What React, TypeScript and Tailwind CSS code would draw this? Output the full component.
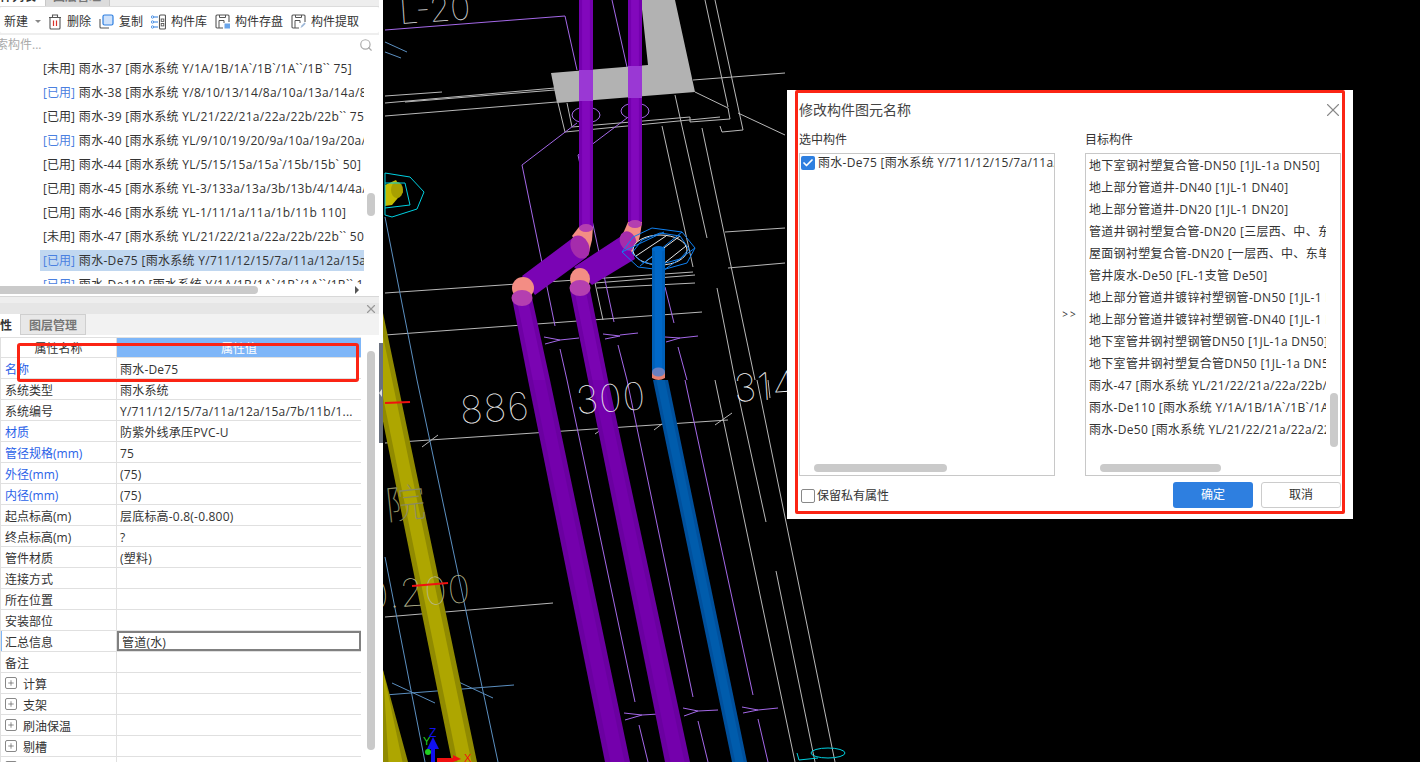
import React from 'react';
import { X, Search, Plus, Check } from 'lucide-react';

const FONT = "font-['Open_Sans','Noto_Sans_CJK_SC',sans-serif]";

// 构件列表
const LIST = [
  { tag: '[未用]', used: false, text: '雨水-37 [雨水系统 Y/1A/1B/1A`/1B`/1A``/1B`` 75]' },
  { tag: '[已用]', used: true, text: '雨水-38 [雨水系统 Y/8/10/13/14/8a/10a/13a/14a/8b/10b]' },
  { tag: '[已用]', used: false, text: '雨水-39 [雨水系统 YL/21/22/21a/22a/22b/22b`` 75]' },
  { tag: '[已用]', used: true, text: '雨水-40 [雨水系统 YL/9/10/19/20/9a/10a/19a/20a/9b]' },
  { tag: '[已用]', used: false, text: '雨水-44 [雨水系统 YL/5/15/15a/15a`/15b/15b` 50]' },
  { tag: '[已用]', used: false, text: '雨水-45 [雨水系统 YL-3/133a/13a/3b/13b/4/14/4a/14a]' },
  { tag: '[已用]', used: false, text: '雨水-46 [雨水系统 YL-1/11/1a/11a/1b/11b 110]' },
  { tag: '[未用]', used: false, text: '雨水-47 [雨水系统 YL/21/22/21a/22a/22b/22b`` 50]' },
  { tag: '[已用]', used: true, text: '雨水-De75 [雨水系统 Y/711/12/15/7a/11a/12a/15a/7b]', selected: true },
  { tag: '[已用]', used: true, text: '雨水-De110 [雨水系统 Y/1A/1B/1A`/1B`/1A``/1B`` 110]' },
];

// 属性表
const PROPS: { name: string; value?: string; blue?: boolean; plus?: boolean; active?: boolean }[] = [
  { name: '名称', value: '雨水-De75', blue: true },
  { name: '系统类型', value: '雨水系统' },
  { name: '系统编号', value: 'Y/711/12/15/7a/11a/12a/15a/7b/11b/1...' },
  { name: '材质', value: '防紫外线承压PVC-U', blue: true },
  { name: '管径规格(mm)', value: '75', blue: true },
  { name: '外径(mm)', value: '(75)', blue: true },
  { name: '内径(mm)', value: '(75)', blue: true },
  { name: '起点标高(m)', value: '层底标高-0.8(-0.800)' },
  { name: '终点标高(m)', value: '?' },
  { name: '管件材质', value: '(塑料)' },
  { name: '连接方式' },
  { name: '所在位置' },
  { name: '安装部位' },
  { name: '汇总信息', value: '管道(水)', active: true },
  { name: '备注' },
  { name: '计算', plus: true },
  { name: '支架', plus: true },
  { name: '刷油保温', plus: true },
  { name: '剔槽', plus: true },
  { name: '', plus: true },
];

const TARGETS = [
  '地下室钢衬塑复合管-DN50 [1JL-1a DN50]',
  '地上部分管道井-DN40 [1JL-1 DN40]',
  '地上部分管道井-DN20 [1JL-1 DN20]',
  '管道井钢衬塑复合管-DN20 [三层西、中、东单元]',
  '屋面钢衬塑复合管-DN20 [一层西、中、东单元]',
  '管井废水-De50 [FL-1支管 De50]',
  '地上部分管道井镀锌衬塑钢管-DN50 [1JL-1 DN50]',
  '地上部分管道井镀锌衬塑钢管-DN40 [1JL-1 DN40]',
  '地下室管井钢衬塑钢管DN50 [1JL-1a DN50]',
  '地下室管井钢衬塑复合管DN50 [1JL-1a DN50]',
  '雨水-47 [雨水系统 YL/21/22/21a/22a/22b/22b`` 50]',
  '雨水-De110 [雨水系统 Y/1A/1B/1A`/1B`/1A``/1B``]',
  '雨水-De50 [雨水系统 YL/21/22/21a/22a/22b/22b``]',
];

const TrashIcon = () => (
  <svg width="14" height="16" viewBox="0 0 14 16" fill="none" className="shrink-0">
    <path d="M1 3.5h12M4.5 3V1h5v2M2 3.5V14a1 1 0 0 0 1 1h8a1 1 0 0 0 1-1V3.5" stroke="#555" strokeWidth="1.1" />
    <path d="M5.5 6.5v5.5M8.5 6.5v5.5" stroke="#d9332b" strokeWidth="1.2" />
  </svg>
);

const CopyIcon = () => (
  <svg width="15" height="15" viewBox="0 0 15 15" fill="none" className="shrink-0">
    <path d="M1 5v8a1 1 0 0 0 1 1h8" stroke="#555" strokeWidth="1.1" />
    <rect x="4" y="1" width="10" height="10" rx="1.5" fill="#cfe2fb" stroke="#2e7fe0" strokeWidth="1.2" />
  </svg>
);

const LibraryIcon = () => (
  <svg width="15" height="16" viewBox="0 0 15 16" fill="none" className="shrink-0">
    <path d="M2 3h5M2 8h5M2 13h5" stroke="#2e7fe0" strokeWidth="1" />
    <circle cx="1.5" cy="3" r="1.2" fill="#fff" stroke="#2e7fe0" strokeWidth="0.8" />
    <circle cx="1.5" cy="8" r="1.2" fill="#fff" stroke="#2e7fe0" strokeWidth="0.8" />
    <circle cx="1.5" cy="13" r="1.2" fill="#fff" stroke="#2e7fe0" strokeWidth="0.8" />
    <rect x="8.5" y="1" width="6" height="14" rx="1" stroke="#555" strokeWidth="1.1" />
    <rect x="10.2" y="5" width="2.6" height="2.4" stroke="#555" strokeWidth="0.9" />
    <rect x="10.2" y="9.5" width="2.6" height="2.4" stroke="#555" strokeWidth="0.9" />
  </svg>
);

const BoxIcon = ({ pen }: { pen?: boolean }) => (
  <svg width="15" height="15" viewBox="0 0 15 15" fill="none" className="shrink-0">
    <path d="M8 14H2a1 1 0 0 1-1-1V2a1 1 0 0 1 1-1h11a1 1 0 0 1 1 1v6" stroke="#555" strokeWidth="1.1" />
    <path d="M4 14V6.5h5V9M4.5 1v2.5h6V1" stroke="#555" strokeWidth="1" />
    {pen ? (
      <path d="M9.5 14l1-2.5 3-3 1.2 1.2-3 3z" fill="#9db8d8" />
    ) : (
      <rect x="9.5" y="9.5" width="5.5" height="5" fill="#6aa5ea" />
    )}
  </svg>
);

const Tool = ({ icon, label, className }: { icon: React.ReactNode; label: string; className: string }) => (
  <div className={`flex items-center gap-[5px] ${className}`}>
    {icon}
    <span>{label}</span>
  </div>
);

const Pipe = ({ p, base, light }: { p: number[]; base: string; light: string }) => {
  const [xl1, xr1, y1, xl2, xr2, y2] = p;
  const i1 = (xr1 - xl1) * 0.22;
  const i2 = (xr2 - xl2) * 0.22;
  return (
    <g>
      <polygon points={`${xl1},${y1} ${xr1},${y1} ${xr2},${y2} ${xl2},${y2}`} fill={base} />
      <polygon points={`${xl1 + i1},${y1} ${xr1 - i1},${y1} ${xr2 - i2},${y2} ${xl2 + i2},${y2}`} fill={light} />
    </g>
  );
};

const WHITE_LINES = [
  '385,96 442,92', '385,103 555,88', '405,102 555,90', '385,116 557,102',
  '558,103 565,132 720,117', '695,92 728,108 730,119 690,122 690,117 572,127 567,103',
  '675,95 707,238', '662,126 693,267', '702,128 755,380', '705,0 728,107', '715,0 743,130 722,132 720,126',
  '693,80 785,73', '738,113 785,135', '725,232 785,228', '728,268 785,263', '717,288 735,380',
  '385,293 693,272', '385,335 702,312', '595,283 695,275', '597,288 695,283', '595,283 603,320',
  '385,443 728,420', '422,447 438,435', '595,434 612,422', '654,430 671,417', '715,425 732,413',
  '385,617 553,603', '735,380 766,522', '715,380 795,762', '757,380 835,762', '776,571 815,762', '768,380 770,398',
];

const PURPLE_LINES = [
  '385,30 565,16 577,70', '577,123 522,165 555,326', '627,118 578,155 614,322', '612,0 627,67',
  '544,337 560,340 545,344', '560,340 579,338',
  '603,334 620,336 605,339', '620,335 638,333', '665,337 680,338 666,342', '680,338 698,336',
  '560,349 567,380', '618,345 627,380', '678,347 687,380', '665,287 674,323',
  '567,380 635,702', '627,380 693,697', '685,380 753,695',
  '624,713 642,715 625,720', '642,715 659,714', '683,708 698,711 684,716', '698,711 718,710',
  '742,707 758,710 743,713', '758,710 778,708', '639,725 648,762', '698,721 708,762', '758,719 768,762',
];

const BLUE_LINES = [
  '385,217 417,380', '417,380 498,762', '385,557 425,762', '385,42 407,52', '385,52 401,58',
  '392,683 435,703', '450,678 493,698', '385,695 514,685',
];

const Canvas = () => (
  <svg viewBox="383 0 1037 762" className="block h-full w-full">
    {/* 灰色楼板 */}
    <polygon points="551,73 648,65 641,0 675,0 695,92 557,103" fill="#b2b2b2" />

    {WHITE_LINES.map((pts) => <polyline key={pts} points={pts} fill="none" stroke="#b8b8b8" strokeWidth="1" />)}
    {BLUE_LINES.map((pts) => <polyline key={pts} points={pts} fill="none" stroke="#5b8fc0" strokeWidth="1" />)}
    {PURPLE_LINES.map((pts) => <polyline key={pts} points={pts} fill="none" stroke="#a468e8" strokeWidth="1" />)}
    <ellipse cx="586" cy="115" rx="14" ry="8" fill="none" stroke="#a468e8" />
    <ellipse cx="635" cy="111" rx="14" ry="8" fill="none" stroke="#a468e8" />

    {/* 黄色管 */}
    <Pipe p={[361, 383, 313, 452, 477, 762]} base="#908a00" light="#aea600" />
    <Pipe p={[383, 383, 670, 383, 408, 762]} base="#908a00" light="#aea600" />
    <polygon points="385,185 396,180 403,192 392,205 385,206" fill="#c4bc00" />
    <ellipse cx="397" cy="190" rx="6" ry="8" fill="#a8a000" />
    <polygon points="385,173 410,177 424,192 417,209 392,217 385,215" fill="none" stroke="#00d0e0" />
    <polyline points="385,183 405,183 410,205 385,208" fill="none" stroke="#00d0e0" />

    {/* 紫色管 */}
    <Pipe p={[579, 593, 0, 579, 593, 228]} base="#7400ae" light="#8208bc" />
    <Pipe p={[628, 642, 0, 628, 642, 222]} base="#7400ae" light="#8208bc" />
    <rect x="579" y="70" width="14" height="31" fill="#9a38d4" />
    <rect x="628" y="66" width="14" height="32" fill="#9a38d4" />
    <polygon points="574,237 522,276 535,295 587,257" fill="#7a04b4" />
    <polygon points="626,233 574,267 592,285 635,259" fill="#7a04b4" />
    <Pipe p={[512, 532, 298, 528, 550, 380]} base="#6e00a4" light="#7a04b2" />
    <Pipe p={[528, 550, 380, 605, 630, 762]} base="#6a00a0" light="#7400ac" />
    <Pipe p={[570, 590, 290, 588, 608, 380]} base="#6e00a4" light="#7a04b2" />
    <Pipe p={[588, 608, 380, 665, 690, 762]} base="#6a00a0" light="#7400ac" />

    {/* 弯头 */}
    <path d="M579 227 L593 227 L592 240 L588 256 L572 236 Z" fill="#f38d84" />
    <path d="M628 222 L642 222 L640 236 L634 256 L622 236 Z" fill="#f38d84" />
    <ellipse cx="523" cy="288" rx="11" ry="11" fill="#f38d84" />
    <ellipse cx="580" cy="279" rx="10" ry="11" fill="#f38d84" />
    <ellipse cx="586" cy="228" rx="7" ry="4" fill="#b43fb0" />
    <ellipse cx="635" cy="224" rx="7" ry="4" fill="#b43fb0" />
    <ellipse cx="580" cy="247" rx="9" ry="12" transform="rotate(-25 580 247)" fill="#a52cac" />
    <ellipse cx="628" cy="241" rx="8" ry="10" transform="rotate(-25 628 241)" fill="#a52cac" />
    <ellipse cx="522" cy="298" rx="10.5" ry="8" fill="#b43fb0" />
    <ellipse cx="580" cy="288" rx="10.5" ry="8" fill="#b43fb0" />

    {/* 地漏 */}
    <ellipse cx="660" cy="250" rx="27" ry="15" fill="#000" stroke="#e8e8e8" strokeWidth="1" />
    <path d="M636 256L666 236M645 262L680 236M662 265L686 246" stroke="#e8e8e8" strokeWidth="1" />
    <polygon points="622,252 633,237 652,228 682,232 695,248 687,263 662,270 638,267" fill="none" stroke="#1080f0" />
    <polygon points="632,253 642,240 660,233 680,236 689,249 680,259 658,265 642,262" fill="none" stroke="#1080f0" />
    <path d="M622 252L664 232M640 266L682 232M664 270L695 248" stroke="#1080f0" />

    {/* 蓝色管 */}
    <Pipe p={[652, 665, 248, 652, 665, 375]} base="#0060b8" light="#0068c8" />
    <ellipse cx="658.5" cy="249" rx="6.5" ry="3" fill="#0068c8" />
    <path d="M652 372h13v6q-6.500 4-13 0z" fill="#e8806f" />
    <ellipse cx="658.5" cy="372" rx="6.5" ry="4.500" fill="#6a80c0" />
    <Pipe p={[653, 668, 380, 732, 747, 762]} base="#00509c" light="#005cac" />

    {/* 标注文字 */}
    <text x="400" y="24" transform="rotate(-4 400 24)" fontSize="34" fontWeight="100" fill="#e0e0e0" fontFamily="Inter, sans-serif">L-20</text>
    <text x="461" y="424" transform="rotate(-4 461 424)" fontSize="38" fontWeight="100" letterSpacing="1" fill="#f0f0f0" fontFamily="Inter, sans-serif">886</text>
    <text x="577" y="414" transform="rotate(-4 577 414)" fontSize="38" fontWeight="100" letterSpacing="1" fill="#f0f0f0" fontFamily="Inter, sans-serif">300</text>
    <text x="735" y="402" transform="rotate(-4 735 402)" fontSize="38" fontWeight="100" letterSpacing="1" fill="#f0f0f0" fontFamily="Inter, sans-serif">314</text>
    <text x="472" y="602" textAnchor="end" transform="rotate(-4 472 602)" fontSize="38" fontWeight="100" letterSpacing="1" fill="#b8b890" fontFamily="Inter, sans-serif">0.200</text>
    <text x="387" y="520" transform="rotate(-6 387 520)" fontSize="40" fontWeight="100" fill="#8a8a60" fontFamily="Noto Sans CJK SC, sans-serif">院</text>

    {/* 标记 */}
    <line x1="385" y1="403" x2="410" y2="402" stroke="#f01010" strokeWidth="2" />
    <line x1="412" y1="586" x2="448" y2="583" stroke="#f01010" strokeWidth="2" />
    <polyline points="797,753 799,760 818,758" fill="none" stroke="#00d0e0" />
    <ellipse cx="828" cy="753" rx="17" ry="5" fill="none" stroke="#00d0e0" />

    {/* 坐标轴 */}
    <rect x="431" y="746" width="4" height="16" fill="#1010f0" />
    <polygon points="433,737 439,749 427,749" fill="#1010f0" />
    <polygon points="437,758 453,758 453,755 461,759 453,762 437,762" fill="#f01010" />
    <circle cx="428" cy="752" r="3" fill="#20d020" />
    <text x="429" y="737" fontSize="12" fill="#1010f0" fontFamily="Liberation Sans, sans-serif">Z</text>
    <text x="423" y="745" fontSize="11" fill="#20d020" fontFamily="Liberation Sans, sans-serif">Y</text>
    <text x="464" y="762" fontSize="11" fill="#f01010" fontFamily="Liberation Sans, sans-serif">X</text>
  </svg>
);

const Dialog = () => (
  <div className="absolute left-[404px] top-[90px] flex h-[429px] w-[566px] flex-col bg-white px-[12px] text-[12px] text-[#333]">
    <div className="flex h-[38px] shrink-0 items-center justify-between">
      <span className="text-[14px] text-[#444]">修改构件图元名称</span>
      <X className="mr-[-3px] mt-[2px] h-[22px] w-[22px] text-[#888]" strokeWidth={1.2} />
    </div>
    <div className="flex h-[25px] shrink-0 gap-[30px] pb-[2px]">
      <span className="flex w-[256px] items-center">选中构件</span>
      <span className="flex w-[256px] items-center">目标构件</span>
    </div>
    <div className="flex h-[323px] shrink-0 items-center">
      <div className="relative h-full w-[256px] overflow-hidden border border-[#c8c8c8] pl-[1px] pt-[1px]">
        <div className="flex h-[16px] items-center gap-[3px] whitespace-nowrap">
          <span className="flex h-[14px] w-[14px] shrink-0 items-center justify-center rounded-[2px] bg-[#2e7fe0]">
            <Check className="h-[12px] w-[12px] text-white" strokeWidth={3.5} />
          </span>
          <span className="tracking-[0.3px]">雨水-De75 [雨水系统 Y/711/12/15/7a/11a/12a/15a/7b]</span>
        </div>
        <div className="absolute bottom-[3px] left-[14px] h-[8px] w-[133px] rounded-full bg-[#cacaca]" />
      </div>
      <div className="flex w-[30px] justify-center text-[10px] tracking-[2px]">&gt;&gt;</div>
      <div className="relative h-full w-[256px] border border-[#c8c8c8] pl-[3px] pt-[1px]">
        <div className="w-[237px] overflow-hidden">
          {TARGETS.map((t) => (
            <div key={t} className="flex h-[22px] items-center whitespace-nowrap tracking-[0.3px]">{t}</div>
          ))}
        </div>
        <div className="absolute bottom-[3px] left-[14px] h-[8px] w-[121px] rounded-full bg-[#cacaca]" />
        <div className="absolute right-[2px] top-[239px] h-[54px] w-[8px] rounded-full bg-[#cacaca]" />
      </div>
    </div>
    <div className="flex flex-1 items-start justify-between pt-[6px]">
      <div className="flex items-center gap-[2px] pl-[2px] pt-[5px]">
        <span className="h-[14px] w-[14px] rounded-[2px] border border-[#888] bg-white" />
        <span>保留私有属性</span>
      </div>
      <div className="flex gap-[8px]">
        <div className="flex h-[26px] w-[80px] items-center justify-center rounded-[3px] bg-[#2e7fe0] text-white">确定</div>
        <div className="flex h-[26px] w-[80px] items-center justify-center rounded-[3px] border border-[#ccc]">取消</div>
      </div>
    </div>
    {/* 红色标注框 */}
    <div className="pointer-events-none absolute left-[8px] top-0 h-[424px] w-[550px] rounded-[2px] border-[3px] border-[#fb2414]" />
  </div>
);

export default function App() {
  return (
    <div className={`relative flex h-[762px] w-[1420px] overflow-hidden bg-black text-[12px] text-[#333] ${FONT}`}>
      <aside className="relative flex w-[383px] shrink-0 bg-white">
        <div className="flex w-[379px] flex-col bg-[#eeeeee]">
          {/* 顶部页签 */}
          <div className="flex h-[7px] shrink-0 overflow-hidden border-b border-[#dcdcdc] bg-[#eeeeee]">
            <div className="h-[6px] w-[45px] overflow-hidden bg-white font-bold">
              <div className="mt-[-10px] ml-[-12px] whitespace-nowrap leading-[14px]">构件列表</div>
            </div>
            <div className="h-[6px] w-[65px] overflow-hidden border-x border-[#c8c8c8] bg-[#dcdcdc] pl-[7px] font-bold text-[#777]">
              <div className="mt-[-10px] whitespace-nowrap leading-[14px]">图层管理</div>
            </div>
          </div>

          {/* 工具栏 */}
          <div className="flex h-[26px] shrink-0 items-center rounded-[2px] bg-white pl-[4px] pt-[3px]">
            <span>新建</span>
            <span className="ml-[7px] h-0 w-0 border-x-[3px] border-t-[3px] border-x-transparent border-t-[#888]" />
            <Tool icon={<TrashIcon />} label="删除" className="ml-[7px]" />
            <Tool icon={<CopyIcon />} label="复制" className="ml-[8px]" />
            <Tool icon={<LibraryIcon />} label="构件库" className="ml-[8px]" />
            <Tool icon={<BoxIcon />} label="构件存盘" className="ml-[8px]" />
            <Tool icon={<BoxIcon pen />} label="构件提取" className="ml-[8px]" />
          </div>

          {/* 搜索框 */}
          <div className="mt-[2px] flex h-[19px] shrink-0 items-center justify-between overflow-hidden bg-white pr-[6px]">
            <span className="ml-[-16px] text-[#aaa]">搜索构件...</span>
            <Search className="h-[14px] w-[14px] text-[#aaa]" strokeWidth={2} />
          </div>

          {/* 构件列表 */}
          <div className="relative h-[243px] shrink-0 border-b border-[#d8d8d8] bg-white">
            <div className="ml-[40px] mt-[1px] h-[229px] w-[324px] overflow-hidden pt-[3px]">
              {LIST.map((row) => (
                <div key={row.text} className={`mb-[3px] flex h-[21px] items-center whitespace-nowrap pl-[3px] ${row.selected ? 'bg-[#c0d7f0]' : ''}`}>
                  <span className={row.used ? 'text-[#4a80e0]' : ''}>{row.tag}</span>
                  <span className="ml-[4px] tracking-[0.3px]">{row.text}</span>
                </div>
              ))}
            </div>
            <div className="absolute left-0 top-[232px] h-[8px] w-[258px] rounded-r-full bg-[#cacaca]" />
            <div className="absolute left-[355px] top-[232px] h-0 w-0 border-y-[4px] border-l-[4px] border-y-transparent border-l-[#555]" />
            <div className="absolute left-[367px] top-[139px] h-[23px] w-[8px] rounded-full bg-[#cacaca]" />
          </div>

          {/* 属性面板 */}
          <div className="mt-[6px] flex min-h-0 flex-1 flex-col bg-white">
            <div className="flex h-[11px] shrink-0 items-center justify-end bg-[#e6e6e6] pr-[1px]">
              <X className="h-[14px] w-[14px] text-[#999]" strokeWidth={2} />
            </div>
            <div className="flex h-[21px] shrink-0 bg-[#f2f2f2] font-bold">
              <div className="flex w-[20px] items-center justify-end overflow-hidden bg-white pr-[8px] pt-[2px]">
                <span>性</span>
              </div>
              <div className="flex w-[66px] items-center justify-center border border-[#cfcfcf] bg-[#e8e8e8] pt-[2px] text-[#777]">图层管理</div>
            </div>
            <div className="mt-[2px] flex min-h-0 flex-1 overflow-hidden">
              <div className="w-[361px] shrink-0 border-l border-[#e0e0e0]">
                <div className="flex h-[21px] border-y border-[#e0e0e0]">
                  <div className="flex w-[116px] items-center justify-center border-r border-[#e0e0e0] pt-[2px]">属性名称</div>
                  <div className="flex flex-1 items-center justify-center bg-[#7eb6f8] pt-[2px] text-white">属性值</div>
                </div>
                {PROPS.map((p) => (
                  <div key={p.name || 'last'} className="flex h-[21px] border-b border-[#e0e0e0]">
                    <div className={`flex w-[116px] shrink-0 items-center gap-[6px] border-r border-[#e0e0e0] pl-[4px] ${p.blue ? 'text-[#2a62e8]' : ''} ${p.active ? 'shadow-[inset_1px_0_0_#7eb6f8]' : ''}`}>
                      {p.plus && (
                        <span className="flex h-[12px] w-[12px] items-center justify-center rounded-[2px] border border-[#888]">
                          <Plus className="h-[8px] w-[8px] text-[#555]" strokeWidth={2} />
                        </span>
                      )}
                      <span className="mt-[3px] whitespace-nowrap">{p.name}</span>
                    </div>
                    <div className={`flex min-w-0 flex-1 items-center whitespace-nowrap pl-[3px] tracking-[0.2px] ${p.active ? 'border-2 border-[#808080] pl-[1px]' : ''}`}>
                      <span className="mt-[3px]">{p.value}</span>
                    </div>
                  </div>
                ))}
              </div>
              <div className="ml-[6px] mt-[14px] h-[399px] w-[8px] rounded-full bg-[#cacaca]" />
            </div>
          </div>
        </div>
        {/* 分隔条 */}
        <div className="absolute left-[379px] top-[343px] flex h-[100px] w-[4px] items-center bg-[#6b7280]">
          <span className="h-0 w-0 border-y-[4px] border-r-[3px] border-y-transparent border-r-[#ddd]" />
        </div>
      </aside>

      <main className="relative flex-1 overflow-hidden">
        <Canvas />
        <Dialog />
      </main>

      {/* 红色标注框 */}
      <div className="pointer-events-none absolute left-[17px] top-[343px] h-[39px] w-[342px] rounded-[3px] border-[3px] border-[#fb2414]" />
    </div>
  );
}
